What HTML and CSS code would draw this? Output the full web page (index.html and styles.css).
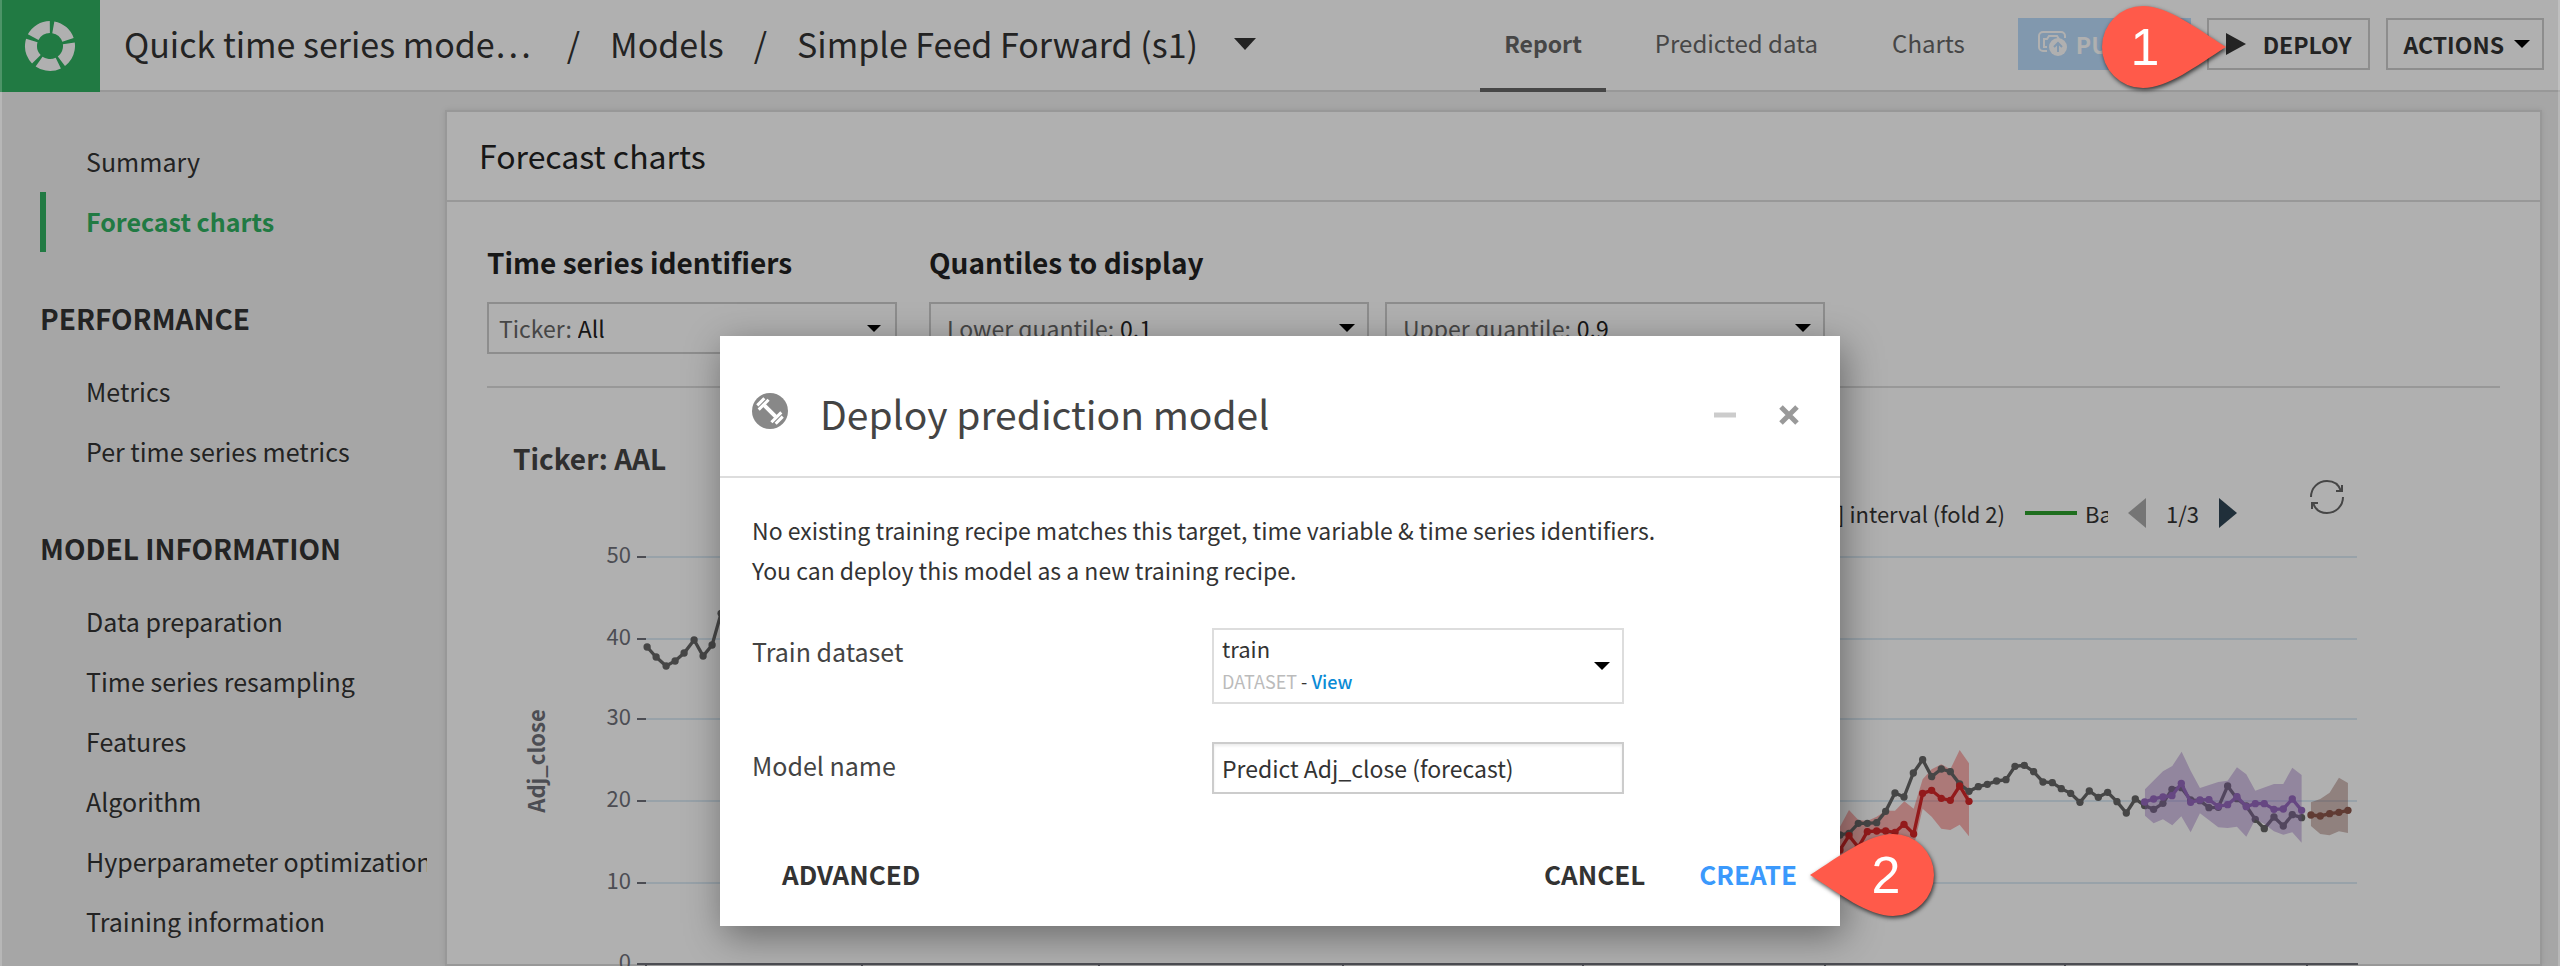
FILE: index.html
```html
<!DOCTYPE html>
<html lang="en">
<head>
    <meta charset="utf-8">
    <title>Deploy prediction model</title>
    <link rel="stylesheet" href="styles.css">
</head>
<body>
    <header class="topbar">
        <a class="logo" href="#" aria-label="Home">
            <svg width="52" height="52" viewBox="0 0 52 52">
                <circle cx="26" cy="26" r="19" pathLength="100" stroke-dasharray="17 3" transform="rotate(-80 26 26)"/>
            </svg>
        </a>
        <nav class="breadcrumb">
            <a class="project" href="#">Quick time series mode…</a>
            <span>/</span>
            <a href="#">Models</a>
            <span>/</span>
            <a href="#">Simple Feed Forward (s1)</a>
            <i class="caret caret-lg"></i>
        </nav>
        <nav class="tabs">
            <a class="tab active" href="#">Report</a>
            <a class="tab" href="#">Predicted data</a>
            <a class="tab" href="#">Charts</a>
        </nav>
        <div class="top-buttons">
            <button class="btn publish" disabled>
                <svg width="30" height="26" viewBox="0 0 30 26">
                    <path d="M9 20H5a4 4 0 0 1-4-4V5a4 4 0 0 1 4-4h18a4 4 0 0 1 4 4v2" fill="none" stroke="#fff" stroke-width="2"/>
                    <path d="M9 16H6V8h3l2-3h8l2 3" fill="none" stroke="#fff" stroke-width="2"/>
                    <circle cx="20" cy="16" r="9" fill="#fff"/>
                    <path d="M20 21v-9M16 16l4-4 4 4" fill="none" stroke="#bcdcfc" stroke-width="2"/>
                </svg>
                PUBLISH
            </button>
            <button class="btn deploy">
                <svg width="22" height="22" viewBox="0 0 22 22"><path d="M1 0l20 11L1 22z" fill="#333"/></svg>
                DEPLOY
            </button>
            <button class="btn">ACTIONS <i class="caret"></i></button>
        </div>
    </header>

    <div class="page">
        <aside class="sidebar">
            <a href="#">Summary</a>
            <a class="active" href="#">Forecast charts</a>
            <h3>PERFORMANCE</h3>
            <a href="#">Metrics</a>
            <a href="#">Per time series metrics</a>
            <h3>MODEL INFORMATION</h3>
            <a href="#">Data preparation</a>
            <a href="#">Time series resampling</a>
            <a href="#">Features</a>
            <a href="#">Algorithm</a>
            <a href="#">Hyperparameter optimization</a>
            <a href="#">Training information</a>
        </aside>

        <main class="card">
            <h2 class="card-title">Forecast charts</h2>
            <div class="card-body">
                <div class="filters">
                    <div class="filter">
                        <h4>Time series identifiers</h4>
                        <div class="select ticker">
                            <label for="ticker">Ticker:</label>
                            <select id="ticker"><option>All</option></select>
                            <i class="caret caret-sm"></i>
                        </div>
                    </div>
                    <div class="filter">
                        <h4>Quantiles to display</h4>
                        <div class="filter-row">
                            <div class="select quantile">
                                <label for="lower">Lower quantile:</label>
                                <select id="lower"><option>0.1</option></select>
                                <i class="caret"></i>
                            </div>
                            <div class="select quantile">
                                <label for="upper">Upper quantile:</label>
                                <select id="upper"><option>0.9</option></select>
                                <i class="caret"></i>
                            </div>
                        </div>
                    </div>
                </div>

                <h4 class="chart-title">Ticker: AAL</h4>
                <div class="chart-tools">
                    <div class="legend">
                        <span>[0.1 - 0.9] interval (fold 2)</span>
                        <i class="legend-line"></i>
                        <span class="legend-cut">Backtest (fold 3)</span>
                        <i class="page-prev"></i>
                        <span>1/3</span>
                        <i class="page-next"></i>
                    </div>
                    <svg class="refresh" width="36" height="34" viewBox="0 0 36 34">
                        <path d="M2 17C2 8 9 1 18 1c7 0 12 4 14 10M34 17c0 9-7 16-16 16-7 0-12-4-14-10"/>
                        <path d="M33 5v6h-6M3 29v-6h6"/>
                    </svg>
                </div>

                <svg class="chart" viewBox="487 540 2013 440">
                    <defs>
                        <marker id="dot" markerWidth="24" markerHeight="24" refX="12" refY="12" markerUnits="userSpaceOnUse">
                            <circle cx="12" cy="12" r="11" fill="#666"/>
                        </marker>
                        <marker id="dot-red" markerWidth="24" markerHeight="24" refX="12" refY="12" markerUnits="userSpaceOnUse">
                            <circle cx="12" cy="12" r="11" fill="#d62728"/>
                        </marker>
                        <marker id="dot-purple" markerWidth="24" markerHeight="24" refX="12" refY="12" markerUnits="userSpaceOnUse">
                            <circle cx="12" cy="12" r="11" fill="#9467bd"/>
                        </marker>
                        <marker id="dot-brown" markerWidth="24" markerHeight="24" refX="12" refY="12" markerUnits="userSpaceOnUse">
                            <circle cx="12" cy="12" r="11" fill="#8c564b"/>
                        </marker>
                    </defs>

                    <path class="grid" d="M646 557H2357M646 639H2357M646 719H2357M646 801H2357M646 883H2357"/>
                    <path class="axis" d="M637 557h9M637 639h9M637 719h9M637 801h9M637 883h9"/>
                    <path class="axis" d="M637 964H2358M646 964v10M862 964v10M1099 964v10M1343 964v10M1583 964v10M1825 964v10M2065 964v10M2307 964v10"/>
                    <g class="labels">
                        <text x="631" y="563">50</text>
                        <text x="631" y="645">40</text>
                        <text x="631" y="725">30</text>
                        <text x="631" y="807">20</text>
                        <text x="631" y="889">10</text>
                        <text x="631" y="970">0</text>
                    </g>
                    <text class="axis-name" transform="translate(545 761) rotate(-90)">Adj_close</text>

                    <g transform="translate(1820 640) scale(0.3333)">
                        <path class="band red" d="M30 600L60 560 87 510 115 540 142 543 170 530 197 512 225 512 253 484 281 506 308 418 335 388 364 373 391 388 419 330 447 370V589L419 554 391 570 364 566 335 530 308 506 281 620 225 660 115 680 30 690z"/>
                        <polyline class="line actual" points="-3519,21 -3492,51 -3462,78 -3435,63 -3408,39 -3378,0 -3351,48 -3324,15 -3297,-80 -3270,-140"/>
                        <polyline class="line actual" points="60,585 87,580 115,550 142,550 170,548 197,514 225,459 252,471 280,399 308,359 335,410 364,387 391,395 419,432 447,454 475,440 502,433 530,423 558,419 585,379 613,376 641,395 669,426 697,428 724,446 752,460 780,487 808,453 835,472 863,457 891,485 919,519 946,477 974,497 1001,508 1029,490 1056,448 1084,443 1112,480 1140,482 1167,503 1195,502 1223,438 1251,476 1279,498 1306,538 1333,566 1362,531 1390,558 1417,524 1445,533"/>
                        <polyline class="line fold-red" points="60,630 87,587 115,622 142,575 170,573 197,573 225,577 252,553 281,582 308,460 335,451 364,475 391,481 419,438 447,484"/>
                        <path class="band purple" d="M975 448L1029 394 1057 378 1085 335 1112 392 1140 444 1195 426 1223 422 1251 382 1279 403 1306 452 1362 432 1390 432 1417 383 1445 405V608L1417 577 1390 584 1362 574 1333 552 1306 538 1279 590 1251 560 1223 564 1195 562 1140 520 1112 577 1084 529 1057 556 1029 538 1001 550 975 527z"/>
                        <polyline class="line fold-purple" points="974,486 1001,477 1029,471 1056,467 1084,430 1112,487 1140,480 1167,479 1195,499 1223,494 1251,470 1279,500 1306,491 1333,491 1362,508 1390,507 1417,477 1445,511"/>
                        <path class="band brown" d="M1473 487L1501 477 1529 458 1557 413 1584 429V579L1557 574 1529 586 1501 582 1473 558z"/>
                        <polyline class="line fold-brown" points="1473,525 1501,528 1529,521 1557,517 1584,511"/>
                    </g>
                </svg>
            </div>
        </main>
    </div>

    <div class="overlay">
        <div class="modal" role="dialog" aria-labelledby="modal-title">
            <div class="modal-header">
                <svg width="36" height="36" viewBox="0 0 36 36">
                    <circle cx="18" cy="18" r="18" fill="#888"/>
                    <g stroke="#fff" transform="rotate(45 18 18)">
                        <path d="M10 18h16" stroke-width="4"/>
                        <path d="M9 11v14M27 11v14" stroke-width="3"/>
                        <path d="M5 13v10M31 13v10" stroke-width="3"/>
                    </g>
                </svg>
                <h1 id="modal-title">Deploy prediction model</h1>
                <button class="icon-btn" aria-label="Minimize">
                    <svg width="22" height="20" viewBox="0 0 22 20"><path d="M0 10h22" stroke="#ccc" stroke-width="5"/></svg>
                </button>
                <button class="icon-btn" aria-label="Close">
                    <svg width="22" height="20" viewBox="0 0 22 20"><path d="M3 2l16 16M19 2L3 18" stroke="#999" stroke-width="5"/></svg>
                </button>
            </div>
            <div class="modal-body">
                <p>No existing training recipe matches this target, time variable &amp; time series identifiers.<br>
                You can deploy this model as a new training recipe.</p>
                <div class="form-row">
                    <label for="dataset">Train dataset</label>
                    <div class="dataset">
                        <div class="dataset-text">
                            <select id="dataset"><option>train</option></select>
                            <div class="dataset-type">DATASET <span>-</span> <a href="#">View</a></div>
                        </div>
                        <i class="caret"></i>
                    </div>
                </div>
                <div class="form-row">
                    <label for="model-name">Model name</label>
                    <input type="text" id="model-name" value="Predict Adj_close (forecast)">
                </div>
            </div>
            <div class="modal-footer">
                <button class="link-btn advanced">ADVANCED</button>
                <button class="link-btn">CANCEL</button>
                <button class="link-btn create">CREATE</button>
            </div>
            <div class="callout callout-create">
                <svg width="124" height="82" viewBox="0 0 124 82"><path d="M0 41C30 22 58 0 83 0a41 41 0 0 1 0 82C58 82 30 60 0 41z"/></svg>
                <span>2</span>
            </div>
        </div>
    </div>

    <div class="callout callout-deploy">
        <svg width="124" height="82" viewBox="0 0 124 82"><path d="M124 41C94 22 66 0 41 0a41 41 0 0 0 0 82C66 82 94 60 124 41z"/></svg>
        <span>1</span>
    </div>
</body>
</html>
```

FILE: styles.css
```css
* {
    box-sizing: border-box;
}

body {
    margin: 0;
    height: 100vh;
    overflow: hidden;
    position: relative;
    display: flex;
    flex-direction: column;
    background: #f1f1f1;
    color: #333;
    font-family: "Noto Sans CJK JP", "Noto Sans CJK SC", sans-serif;
    font-size: 25px;
}

a {
    color: inherit;
    text-decoration: none;
}

h1, h2, h3, h4, p {
    margin: 0;
}

button, input, select {
    font: inherit;
    color: inherit;
    margin: 0;
    padding: 0;
    border: none;
    background: none;
}

select {
    appearance: none;
}

.caret {
    flex: none;
    border: 8px solid transparent;
    border-top-color: #000;
    border-bottom: none;
}

.caret-sm {
    border-width: 7px;
    border-bottom: none;
}

.caret-lg {
    margin-left: 6px;
    border-width: 12px 11px 0;
    border-top-color: #333;
}

/* top bar */
.topbar {
    flex: none;
    display: flex;
    height: 92px;
    padding-right: 16px;
    background: #fff;
    border-bottom: 2px solid #ddd;
}

.logo {
    display: flex;
    align-items: center;
    justify-content: center;
    width: 100px;
    height: 92px;
    background: #30b161;
}

.logo circle {
    fill: none;
    stroke: #fff;
    stroke-width: 12;
}

.breadcrumb {
    display: flex;
    align-items: center;
    gap: 30px;
    padding: 0 0 2px 24px;
    font-size: 34px;
    line-height: 50px;
    white-space: nowrap;
}

.project {
    padding-right: 6px;
}

.tabs {
    display: flex;
    gap: 24px;
    margin-left: auto;
    color: #666;
    font-size: 24px;
}

.tab {
    height: 92px;
    padding: 0 25px;
    line-height: 86px;
}

.tab.active {
    padding: 0 24px;
    font-size: 23px;
    font-weight: 700;
    border-bottom: 4px solid #666;
}

.top-buttons {
    display: flex;
    align-items: center;
    gap: 16px;
    padding: 0 0 2px 28px;
}

.btn {
    display: flex;
    align-items: center;
    gap: 10px;
    height: 52px;
    padding: 0 12px 0 16px;
    border: 2px solid #ccc;
    font-size: 23px;
    line-height: 44px;
    font-weight: 700;
}

.publish {
    gap: 8px;
    padding: 0 12px 0 18px;
    background: #bcdcfc;
    border-color: #bcdcfc;
    color: #fff;
}

.deploy {
    gap: 16px;
    padding: 0 16px;
}

/* sidebar */
.page {
    flex: 1;
    display: flex;
    min-height: 0;
}

.sidebar {
    flex: none;
    width: 445px;
    padding: 40px 18px 0 40px;
}

.sidebar a {
    display: block;
    padding: 0 0 2px 46px;
    font-size: 25px;
    line-height: 58px;
    white-space: nowrap;
    overflow: hidden;
}

.sidebar a.active {
    padding-left: 40px;
    border-left: 6px solid #30b161;
    color: #30b161;
    font-weight: 700;
}

.sidebar h3 {
    padding: 44px 0 22px;
    font-size: 28px;
    line-height: 44px;
}

/* content card */
.card {
    flex: 1;
    margin: 18px 18px 0 0;
    background: #fff;
    border: 2px solid #ddd;
    box-shadow: 0 0 6px rgba(0, 0, 0, 0.1);
}

.card-title {
    padding: 0 32px 2px;
    border-bottom: 2px solid #ddd;
    font-size: 32px;
    font-weight: 400;
    line-height: 86px;
    color: #222;
}

.card-body {
    padding: 40px 40px 0;
}

.card h4 {
    font-size: 28px;
    line-height: 40px;
    color: #222;
}

.filters {
    display: flex;
    gap: 32px;
    padding-bottom: 32px;
    border-bottom: 2px solid #ddd;
}

.filter-row {
    display: flex;
    gap: 16px;
}

.select {
    display: flex;
    align-items: center;
    gap: 6px;
    height: 52px;
    margin-top: 20px;
    padding: 0 12px 0 10px;
    border: 2px solid #ccc;
    font-size: 23px;
    line-height: 40px;
}

.ticker {
    width: 410px;
    padding-right: 14px;
}

.quantile {
    width: 440px;
    padding-left: 16px;
}

.select label {
    color: #666;
}

.select select {
    flex: 1;
    color: #222;
}

.card .chart-title {
    padding: 50px 26px 0;
    color: #444;
}

.chart-tools {
    display: flex;
    justify-content: flex-end;
    align-items: flex-start;
    gap: 72px;
    height: 62px;
    padding-right: 155px;
}

.legend {
    display: flex;
    align-items: center;
    gap: 20px;
    padding-top: 15px;
    font-size: 22px;
    line-height: 40px;
    white-space: nowrap;
}

.legend-line {
    width: 52px;
    height: 4px;
    background: #2ca02c;
}

.legend-cut {
    width: 23px;
    margin-left: -12px;
    overflow: hidden;
}

.page-prev, .page-next {
    border: 15px solid transparent;
    border-width: 15px 18px;
}

.page-prev {
    border-left: none;
    border-right-color: #aaa;
}

.page-next {
    border-right: none;
    border-left-color: #2f4554;
}

.refresh {
    margin-top: 2px;
    fill: none;
    stroke: #666;
    stroke-width: 2;
}

/* chart */
.chart {
    display: block;
    width: 100%;
}

.grid {
    stroke: #dcebf5;
    stroke-width: 2;
}

.axis {
    stroke: #6e7079;
    stroke-width: 2;
}

.labels {
    font-size: 22px;
    fill: #6e7079;
    text-anchor: end;
}

.axis-name {
    font-size: 22px;
    font-weight: 700;
    fill: #6e7079;
    text-anchor: middle;
}

.line {
    fill: none;
    stroke-width: 10;
}

.actual {
    stroke: #666;
    marker: url(#dot);
}

.fold-red {
    stroke: #d62728;
    marker: url(#dot-red);
}

.fold-purple {
    stroke: #9467bd;
    marker: url(#dot-purple);
}

.fold-brown {
    stroke: #8c564b;
    marker: url(#dot-brown);
}

.band {
    opacity: 0.4;
}

.red {
    fill: #f03a38;
}

.purple {
    fill: #9467bd;
}

.brown {
    fill: #8c564b;
}

/* modal */
.overlay {
    position: absolute;
    inset: 0;
    display: flex;
    justify-content: center;
    align-items: flex-start;
    padding-top: 336px;
    background: rgba(0, 0, 0, 0.31);
    border: solid rgba(255, 255, 255, 0.2);
    border-width: 0 2px;
}

.modal {
    position: relative;
    width: 1120px;
    background: #fff;
    box-shadow: 4px 10px 36px rgba(0, 0, 0, 0.4);
}

.modal-header {
    display: flex;
    align-items: center;
    height: 142px;
    padding: 10px 40px 0 32px;
    border-bottom: 2px solid #ddd;
}

.modal-header h1 {
    flex: 1;
    padding: 4px 0 0 32px;
    font-size: 39px;
    font-weight: 400;
    line-height: 60px;
    color: #444;
}

.icon-btn {
    display: flex;
    margin: 8px 0 0 42px;
}

.modal-body {
    padding: 32px 32px 0;
}

.modal-body p {
    font-size: 23px;
    line-height: 40px;
}

.form-row {
    display: flex;
    align-items: flex-start;
    margin-top: 38px;
}

.form-row > label {
    width: 460px;
    font-size: 25px;
    line-height: 46px;
    color: #444;
}

.dataset, .form-row input {
    width: 412px;
    border: 2px solid #ddd;
    font-size: 23px;
}

.dataset {
    display: flex;
    align-items: center;
    height: 76px;
    padding: 0 12px 0 8px;
}

.dataset-text {
    flex: 1;
    padding-bottom: 6px;
}

.dataset select {
    display: block;
    width: 100%;
    height: 36px;
    font-size: 22px;
    line-height: 36px;
}

.dataset-type {
    font-size: 18px;
    line-height: 30px;
    color: #bbb;
}

.dataset-type span {
    color: #333;
}

.dataset-type a {
    color: #0a8bd6;
    font-weight: 500;
}

.form-row input {
    height: 52px;
    padding: 0 8px;
    border-color: #ccc;
    box-shadow: inset 0 2px 3px rgba(0, 0, 0, 0.08);
}

.modal-footer {
    display: flex;
    gap: 54px;
    padding: 55px 43px 27px 62px;
}

.link-btn {
    font-size: 26px;
    font-weight: 700;
    line-height: 50px;
}

.advanced {
    margin-right: auto;
}

.create {
    color: #3b99fc;
}

/* numbered callouts */
.callout {
    position: absolute;
    width: 124px;
    height: 82px;
}

.callout svg {
    display: block;
    overflow: visible;
    fill: #ff5a4a;
    filter: drop-shadow(1px 2px 2px rgba(0, 0, 0, 0.7));
}

.callout span {
    position: absolute;
    inset: 0;
    color: #fff;
    font-family: "Liberation Sans", Arial, sans-serif;
    font-size: 52px;
    line-height: 82px;
    text-align: center;
}

.callout-deploy {
    top: 6px;
    right: 334px;
}

.callout-deploy span {
    right: 38px;
}

.callout-create {
    right: -94px;
    bottom: 10px;
}

.callout-create span {
    left: 28px;
}
```
